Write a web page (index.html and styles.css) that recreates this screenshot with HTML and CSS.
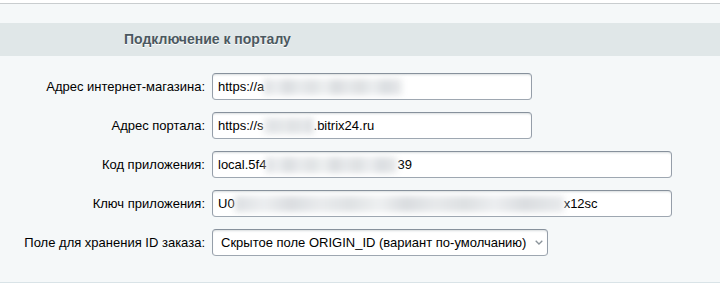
FILE: index.html
```html
<!DOCTYPE html>
<html lang="ru">
<head>
    <meta charset="UTF-8">
    <meta name="viewport" content="width=device-width, initial-scale=1.0">
    <title>Подключение к порталу</title>
    <link rel="stylesheet" href="styles.css">
</head>
<body>
    <div class="panel">
        <div class="heading">Подключение к порталу</div>
        <div class="form">
            <label class="label">Адрес интернет-магазина:</label>
            <div class="field short">https://a<span class="blur w138"></span></div>

            <label class="label">Адрес портала:</label>
            <div class="field short">https://s<span class="blur w50"></span>.bitrix24.ru</div>

            <label class="label">Код приложения:</label>
            <div class="field long">local.5f4<span class="blur w131"></span>39</div>

            <label class="label">Ключ приложения:</label>
            <div class="field long">U0<span class="blur w329"></span>x12sc</div>

            <label class="label">Поле для хранения ID заказа:</label>
            <div class="select-wrap">
                <select class="select">
                    <option>Скрытое поле ORIGIN_ID (вариант по-умолчанию)</option>
                </select>
                <svg class="chevron" width="8" height="5" viewBox="0 0 8 5">
                    <path d="M0.7 0.7 L4 4 L7.3 0.7" fill="none" stroke="#8b949b" stroke-width="1.3"/>
                </svg>
            </div>
        </div>
    </div>
</body>
</html>
```

FILE: styles.css
```css
*{
    margin: 0;
    padding: 0;
    box-sizing: border-box;
}

body{
    background-color: #fff;
    font-family: "Liberation Sans", Arial, sans-serif;
    font-size: 13px;
    color: #000;
    padding-top: 3px;
}

.panel{
    background-color: #f5f8f9;
    border-top: 1px solid #c9cdcf;
    border-bottom: 1px solid #d9e3e7;
    padding: 19px 0 26px;
}

.heading{
    height: 33px;
    line-height: 33px;
    background-color: #e0e7e8;
    padding-left: 124px;
    font-weight: bold;
    font-size: 14px;
    color: #4b5860;
    text-shadow: 0 1px #fff;
}

.form{
    display: grid;
    grid-template-columns: 205px auto;
    column-gap: 7px;
    row-gap: 12px;
    padding-top: 17px;
    align-items: center;
}

.label{
    text-align: right;
    color: #000;
}

.field,
.select{
    height: 27px;
    background-color: #fff;
    border: 1px solid;
    border-color: #87919c #959ea9 #9ea7b1 #959ea9;
    border-radius: 4px;
    box-shadow: inset 0 2px 2px -1px rgba(180,188,191,0.5);
    font-family: "Liberation Sans", Arial, sans-serif;
    font-size: 13px;
    color: #000;
}

.field{
    display: flex;
    align-items: center;
    padding-left: 5px;
    white-space: nowrap;
    overflow: hidden;
}

.short{
    width: 320px;
}

.long{
    width: 460px;
}

/* скрытые данные */
.blur{
    display: inline-block;
    height: 16px;
    background-color: #e6e8ea;
    background-image: linear-gradient(90deg, #dcdfe2 0%, #eceef0 9%, #dadde0 17%, #e9ebed 26%, #dfe2e4 35%, #eef0f1 44%, #d9dcdf 52%, #e7e9eb 61%, #dde0e2 70%, #eceef0 79%, #dadde0 88%, #e8eaec 100%);
    filter: blur(3px);
}

.w50{ width: 50px; }
.w131{ width: 131px; }
.w138{ width: 138px; }
.w329{ width: 329px; }

.select-wrap{
    position: relative;
    width: 336px;
}

.select{
    width: 336px;
    appearance: none;
    -webkit-appearance: none;
    padding-left: 8px;
    outline: none;
}

.chevron{
    position: absolute;
    right: 5px;
    top: 11px;
}
```
